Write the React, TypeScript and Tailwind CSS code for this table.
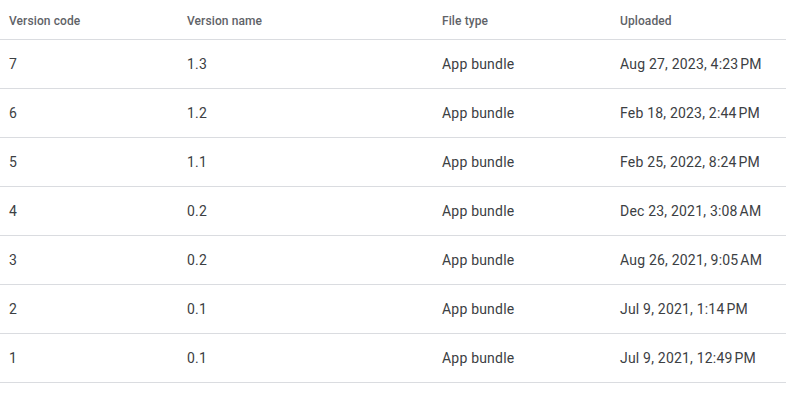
import React from "react";

const rows = [
  ["7", "1.3", "App bundle", "Aug 27, 2023, 4:23\u202FPM"],
  ["6", "1.2", "App bundle", "Feb 18, 2023, 2:44\u202FPM"],
  ["5", "1.1", "App bundle", "Feb 25, 2022, 8:24\u202FPM"],
  ["4", "0.2", "App bundle", "Dec 23, 2021, 3:08\u202FAM"],
  ["3", "0.2", "App bundle", "Aug 26, 2021, 9:05\u202FAM"],
  ["2", "0.1", "App bundle", "Jul 9, 2021, 1:14\u202FPM"],
  ["1", "0.1", "App bundle", "Jul 9, 2021, 12:49\u202FPM"],
];

export default function App() {
  return (
    <div className="w-[786px] h-[395px] bg-white" style={{ fontFamily: "Roboto, sans-serif" }}>
      <div className="grid grid-cols-[178px_255px_178px_1fr] h-[40px] items-center pt-[2px] border-b border-[#dadce0] text-[12px] text-[#5f6368] font-medium tracking-[0.1px]">
        <div className="pl-[9px]">Version code</div>
        <div className="pl-[9px]">Version name</div>
        <div className="pl-[9px]">File type</div>
        <div className="pl-[9px]">Uploaded</div>
      </div>
      {rows.map((r, i) => (
        <div
          key={i}
          className="grid grid-cols-[178px_255px_178px_1fr] h-[49px] items-center border-b border-[#dadce0] text-[14px] text-[#3c4043] tracking-[0.2px]"
        >
          {r.map((c, j) => (
            <div key={j} className="pl-[9px]">{c}</div>
          ))}
        </div>
      ))}
    </div>
  );
}
